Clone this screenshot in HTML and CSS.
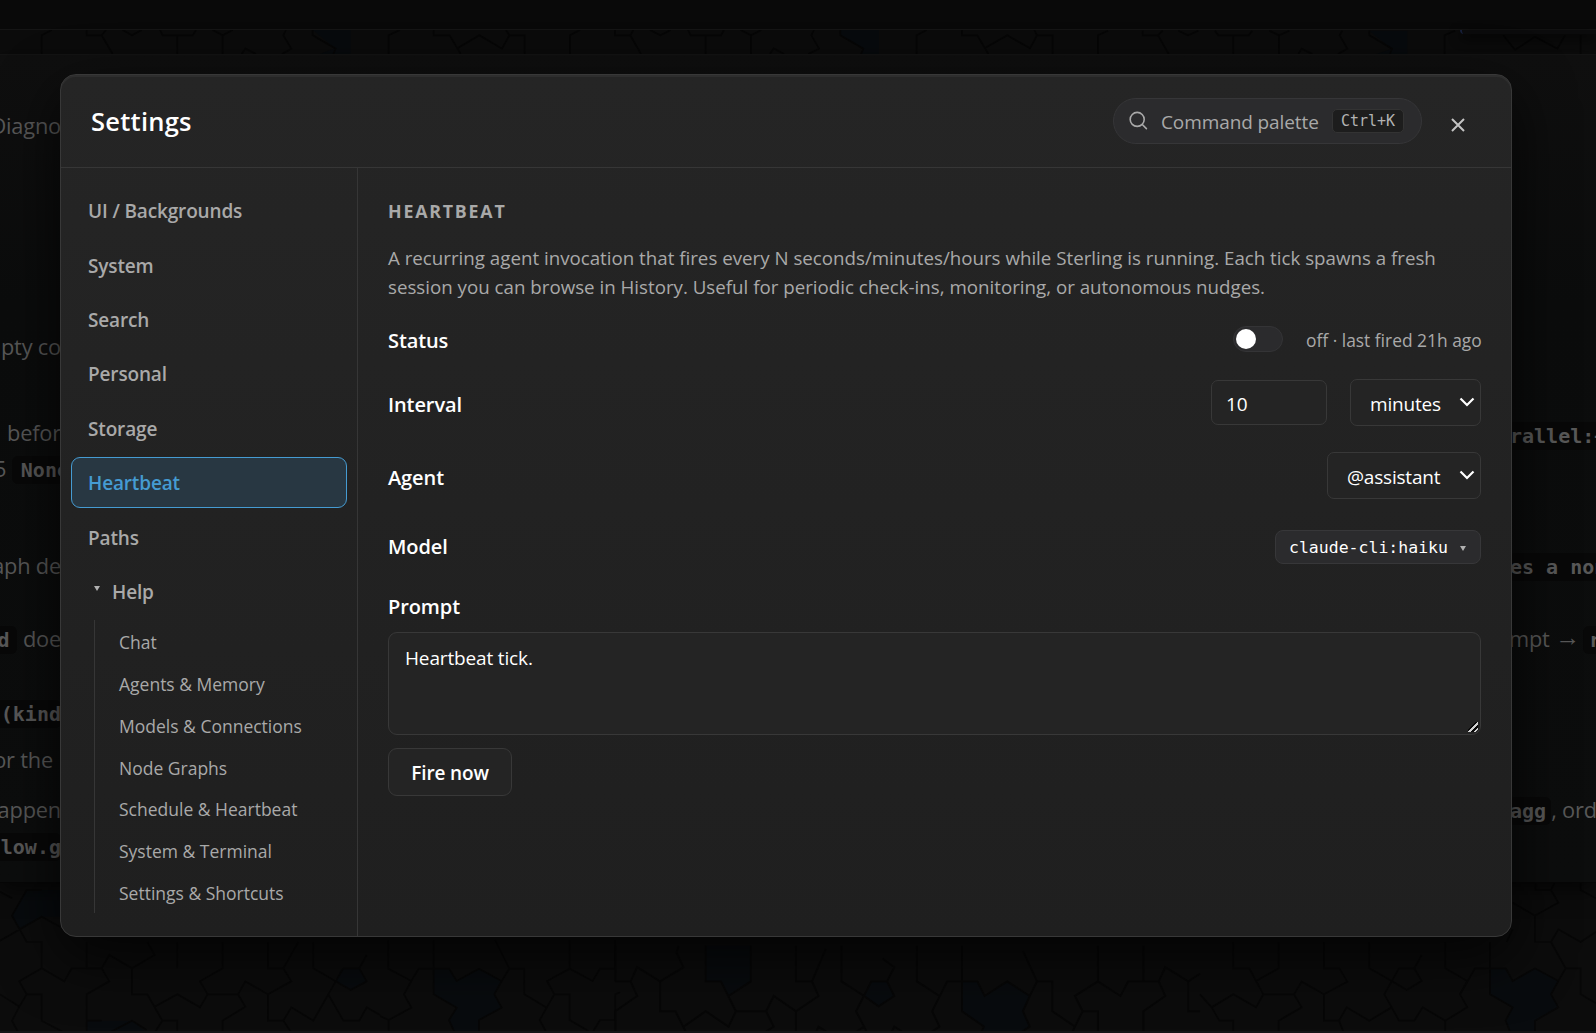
FILE: index.html
```
<!DOCTYPE html>
<html lang="en">
<head>
    <meta charset="utf-8">
    <title>Sterling - Settings</title>
    <link rel="stylesheet" href="styles.css">
</head>
<body>
    <div class="page">
        <svg class="tiles" width="1596" height="1033" viewBox="0 0 1596 1033">
            <g class="tile-fill">
                <g transform="scale(.33333)">
                    <path d="M938 90H1052V162H960L1005 145Z"/>
                </g>
                <g transform="translate(780 20) scale(.33333)">
                    <path d="M181 30H297V102H243L250 86L181 46Z"/>
                </g>
                <g transform="translate(1080 0) scale(.33333)">
                    <path d="M868 92H982V162H890L935 147Z"/>
                </g>
                <g transform="translate(0 560) scale(.33333)">
                    <path d="M80 990H180V1070L125 1070L58 1105L36 1067Z"/>
                    <path d="M260 1382H305L396 1382L440 1418H260Z"/>
                    <path d="M1025 1225H1078L1100 1264L1052 1290L1007 1264Z"/>
                </g>
                <g transform="translate(380 930) scale(.33333)">
                    <path d="M161 116H207L230 153L297 116L365 153L343 193L365 233L297 270V303H222L207 270L230 233L161 193Z"/>
                </g>
                <g transform="translate(600 880) scale(.3827)">
                    <path d="M276 172H394V265L336 303L316 265H276Z"/>
                    <path d="M709 265H750L769 303L728 330L690 303Z"/>
                    <path d="M946 265H986L1005 303L1064 265L1123 303L1105 343L1123 383L1064 422V455H1000L986 422L1003 383L946 343Z"/>
                    <path d="M40 422H80L97 455H40ZM1420 422H1460L1477 455H1420Z"/>
                </g>
                <g transform="translate(1200 580) scale(.33333)">
                    <path d="M870 1165H917L938 1203L1005 1165L1075 1203L1053 1243L1075 1282L1005 1322V1355H930L917 1322L938 1282L870 1243Z"/>
                </g>
            </g>
            <g class="tile-line">
                <g transform="scale(.33333)">
                    <path d="M155 90L125 106V162M260 90V106H305L338 162M305 106L318 90M368 90L396 106L425 90M480 90L488 106H578L588 90M532 106V162M638 90L668 106L698 90M668 106V162M725 162L736 146L768 162M858 90L850 106L874 146L846 162M938 90V106L1007 146L1000 162M1200 90L1166 106V162"/>
                </g>
                <g transform="translate(400 20) scale(.33333)">
                    <path d="M101 30V46H149L172 85L238 46L306 86L328 46H374V102M328 46L318 30M172 85L182 102M540 30L510 46V102M645 30V46H691L723 102M691 46L700 30M750 30L781 46L812 30M864 30L872 46H963L972 30M917 46V102M1022 30L1053 46L1084 30M1053 46V102M1110 102L1121 85L1152 102"/>
                </g>
                <g transform="translate(780 20) scale(.33333)">
                    <path d="M102 30L94 46L117 86L85 102M181 30V46L250 86L243 102M440 30L410 46V102M546 30V46H592L625 102M614 85L682 46L750 85L771 46H818V102M771 46L763 30"/>
                </g>
                <g transform="translate(1080 0) scale(.33333)">
                    <path d="M84 92L54 106V162M188 92V106H234L266 162M234 106L248 92M295 92L324 106L355 92M405 92L415 106H506L517 92M460 106V162M568 92L597 106L628 92M597 106V162M655 162L665 146L697 162M787 92L779 106L802 146L774 162M868 92V106L936 146L930 162M1125 92L1094 106V162M1270 106L1305 150L1365 110L1432 146L1455 106M1502 106V162"/>
                </g>
                <g transform="translate(0 560) scale(.33333)">
                    <path d="M0 995L36 1015M125 990H80L36 1067L80 1146H125V1225L193 1264L215 1225H305L328 1185L396 1225L464 1185L442 1146M0 1142L125 1070L180 1100M125 1225L58 1264L80 1303H125V1382L193 1418M0 1303L58 1340L36 1382L55 1418M58 1340L80 1303M260 1146V1225M260 1382V1303L328 1264L305 1225M396 1225V1303H442L487 1382L464 1418M260 1418V1382H305M328 1418L396 1382L440 1410M464 1340L532 1303L600 1342L623 1303L600 1264L668 1225V1146M532 1146V1225M487 1382H532V1418M623 1303H714L736 1340L668 1382V1418M714 1303L736 1264L804 1303V1382L850 1382L874 1342L940 1382L985 1303L1007 1264L940 1225V1146M804 1146V1225H850L874 1264L804 1303M850 1225L895 1146M850 1382L874 1418M985 1303L1030 1382H1078L1100 1342L1140 1365M1007 1264L1030 1225H1078L1100 1185M1078 1225L1100 1264L1052 1290L1007 1264"/>
                </g>
                <g transform="translate(380 930) scale(.33333)">
                    <path d="M25 30V116L94 153L116 116H207L230 153L297 116L365 153L343 193L365 233L297 270V303M94 153L72 193L94 233L26 270V303M26 270L0 258M161 30V193L230 233L207 270L222 303M345 30L388 116L365 153M388 116H433V193L500 233L523 193L501 153L569 116L638 153L660 116H706V30M569 30V116M523 193H569V270L625 303M500 233L479 270L497 303M640 303L660 270H706V193L720 187"/>
                </g>
                <g transform="translate(600 880) scale(.3827)">
                    <path d="M40 265H80L97 228L157 265L218 228L200 190L205 172M40 172V265M80 265L97 303L40 343V455M157 265V343H197L237 422L220 455M40 422H80L97 455M112 455L157 422L200 455M276 172V265H316L355 343H434L454 303L512 343L571 303L554 265L590 180M394 172V265L336 303M219 383L276 343L336 383L355 343M237 422H276V455M434 343L454 383L394 422V455M512 172V265H554M512 343V422H554L571 383L631 422L690 383L669 343L709 265H750L769 303L728 330L690 303L631 265V172M554 422L571 455M750 265L769 228L738 205M690 383L709 422H750L769 383L828 422L887 383L868 343L907 265H986L1005 303L1064 265L1123 303L1142 265H1182V343L1241 383L1261 343L1241 303L1301 265L1360 303L1380 265H1460L1477 228L1537 265L1568 245M828 172V265L887 303M828 422V455M946 172V343L1003 383L986 422L1000 455M1142 265L1105 185M1123 303L1105 343L1123 383L1064 422V455M1241 383L1222 422L1240 455M1261 343H1301V422L1360 455L1380 422H1460L1477 455M1301 172V265M1420 172V265M1460 265L1477 303L1420 343V455M1537 265V343H1568M1490 455L1537 422L1568 440"/>
                </g>
                <g transform="translate(1200 580) scale(.33333)">
                    <path d="M0 1243L35 1282L100 1243L168 1282L190 1243H282L305 1282L236 1322V1355M35 1282L58 1322H100V1355M100 1086V1165H148L190 1243M236 1086V1165L168 1203L148 1165M282 1243L305 1205L372 1243L442 1205L418 1165H372V1086M372 1243V1322H417L440 1282L508 1322L575 1282L553 1243L597 1165H643L665 1203L620 1230L575 1203L508 1165V1086M417 1322L430 1355M575 1282L597 1322H643L668 1282L736 1322M665 1125L643 1165M736 1086V1165L802 1203L780 1243"/>
                    <path d="M938 968L1005 1007L1075 968L1053 930H1007V905M1053 930L1065 905M1142 905V930L1188 955M1005 1007V1086H1053L1075 1048L1142 1086L1188 1055M1053 1086L1097 1165H1142V1243L1188 1270M870 1086V1243L938 1282L917 1322L930 1355M870 1165H825L780 1243L802 1282L736 1322V1355M870 1165H917L938 1203L1005 1165L1075 1203L1097 1165M1075 1203L1053 1243L1075 1282L1005 1322V1355M938 1048L920 1086"/>
                </g>
            </g>
        </svg>

        <div class="topbar"></div>
        <div class="popover-edge"></div>

        <!-- document behind the dialog -->
        <div class="doc">
            <div class="doc-line first"><span class="left">Diagno</span></div>
            <div class="doc-line gap-185"><span class="left">empty co</span></div>
            <div class="doc-line gap-50"><span class="left">befor</span><span class="right low"><code class="cut-left">rallel:+</code></span></div>
            <div class="doc-line"><span class="left wide">5 <code class="cut-right">None</code></span></div>
            <div class="doc-line gap-61"><span class="left">graph de</span><span class="right"><code class="cut-left">es a non</code></span></div>
            <div class="doc-line gap-37"><span class="left"><code>d</code> doe</span><span class="right">mpt <span class="arrow">→</span> <code class="edge">r</code></span></div>
            <div class="doc-line gap-38"><span class="left"><code class="cut-right">(kind</code></span></div>
            <div class="doc-line gap-11"><span class="left short">for the</span></div>
            <div class="doc-line gap-14"><span class="left">appen</span><span class="right"><code class="cut-left">agg</code>, ord</span></div>
            <div class="doc-line"><span class="left"><code class="cut-right">flow.g</code></span></div>
        </div>
    </div>

    <div class="overlay">
        <div class="modal">
            <header class="modal-header">
                <h1>Settings</h1>
                <button class="palette">
                    <svg width="20" height="20" viewBox="0 0 20 20" fill="none" stroke="currentColor" stroke-width="1.6" stroke-linecap="round">
                        <circle cx="8.2" cy="8.4" r="7"/>
                        <path d="M13.3 13.5L17.4 17.6"/>
                    </svg>
                    <span class="palette-label">Command palette</span>
                    <kbd>Ctrl+K</kbd>
                </button>
                <button class="close">
                    <svg width="14" height="14" viewBox="0 0 14 14" stroke="currentColor" stroke-width="2">
                        <path d="M1 1L13 13M13 1L1 13"/>
                    </svg>
                </button>
            </header>

            <div class="modal-body">
                <nav class="sidebar">
                    <a class="nav-item">UI / Backgrounds</a>
                    <a class="nav-item">System</a>
                    <a class="nav-item">Search</a>
                    <a class="nav-item">Personal</a>
                    <a class="nav-item">Storage</a>
                    <a class="nav-item active">Heartbeat</a>
                    <a class="nav-item">Paths</a>
                    <a class="nav-item help"><span class="caret"></span>Help</a>
                    <div class="sub-nav">
                        <a>Chat</a>
                        <a>Agents &amp; Memory</a>
                        <a>Models &amp; Connections</a>
                        <a>Node Graphs</a>
                        <a>Schedule &amp; Heartbeat</a>
                        <a>System &amp; Terminal</a>
                        <a>Settings &amp; Shortcuts</a>
                    </div>
                </nav>

                <main class="content">
                    <h2>HEARTBEAT</h2>
                    <p class="desc">A recurring agent invocation that fires every N seconds/minutes/hours while Sterling is running. Each tick spawns a fresh<br>session you can browse in History. Useful for periodic check-ins, monitoring, or autonomous nudges.</p>

                    <div class="row row-status">
                        <label>Status</label>
                        <span class="toggle"><span class="knob"></span></span>
                        <span class="status-text">off · last fired 21h ago</span>
                    </div>
                    <div class="row row-field">
                        <label>Interval</label>
                        <input class="number" type="text" value="10">
                        <div class="select select-unit">
                            <span>minutes</span>
                            <svg width="16" height="10" viewBox="0 0 16 10" fill="none" stroke="currentColor" stroke-width="2.2"><path d="M1.5 1.5L8 8L14.5 1.5"/></svg>
                        </div>
                    </div>
                    <div class="row row-field">
                        <label>Agent</label>
                        <div class="select select-agent">
                            <span>@assistant</span>
                            <svg width="16" height="10" viewBox="0 0 16 10" fill="none" stroke="currentColor" stroke-width="2.2"><path d="M1.5 1.5L8 8L14.5 1.5"/></svg>
                        </div>
                    </div>
                    <div class="row row-model">
                        <label>Model</label>
                        <button class="model">claude-cli:haiku<span class="caret"></span></button>
                    </div>
                    <div class="row row-prompt">
                        <label>Prompt</label>
                    </div>
                    <textarea class="prompt">Heartbeat tick.</textarea>
                    <button class="fire">Fire now</button>
                </main>
            </div>
        </div>
    </div>
</body>
</html>
```
FILE: styles.css
```
* {
    box-sizing: border-box;
}
body {
    margin: 0;
    width: 1596px;
    height: 1033px;
    overflow: hidden;
    background: #0c0c0c;
    color-scheme: dark;
    font-family: "Open Sans", "Noto Sans", sans-serif;
    color: #fff;
}
h1, h2, p {
    margin: 0;
}
button, input, textarea {
    font-family: inherit;
    margin: 0;
}

/* page behind */
.page {
    position: relative;
    height: 1033px;
    overflow: hidden;
    border-bottom: 2px solid #141416;
}
.tiles {
    position: absolute;
    top: 0;
    left: 0;
}
.tile-fill {
    fill: #080b0e;
}
.tile-line {
    fill: none;
    stroke: #070707;
    stroke-width: 5;
}
.topbar {
    position: relative;
    height: 30px;
    background: #090909;
    border-bottom: 1px solid #151515;
}
.popover-edge {
    position: absolute;
    top: 30px;
    right: 0;
    width: 136px;
    height: 4px;
    background: #0c0c0d;
    border-left: 2px solid #18203a;
    border-bottom-left-radius: 6px;
    box-shadow: 0 4px 12px #000;
}
.doc {
    position: relative;
    height: 829px;
    margin-top: 24px;
    background: linear-gradient(180deg, #0f0f0f, #0b0c0c 30%, #0c0d0d);
    border-top: 1px solid #131313;
    border-bottom: 1px solid #060606;
    box-shadow: 0 6px 20px rgba(0, 0, 0, 0.6);
}
.doc-line {
    display: flex;
    justify-content: space-between;
    align-items: center;
    height: 36px;
    padding-bottom: 3px;
    font-size: 21.8px;
    letter-spacing: -0.2px;
    color: #585858;
    white-space: pre;
}
.doc-line.first { margin-top: 54px; }
.gap-185 { margin-top: 185px; }
.gap-50 { margin-top: 50px; }
.gap-61 { margin-top: 61px; }
.gap-37 { margin-top: 37px; }
.gap-38 { margin-top: 38px; }
.gap-11 { margin-top: 11px; }
.gap-14 { margin-top: 14px; }
.doc-line .left {
    display: flex;
    justify-content: flex-end;
    align-items: center;
    width: 61px;
}
.doc-line .left.wide {
    width: 69px;
}
.doc-line .left.short {
    width: 53px;
}
.doc-line .right {
    display: flex;
    align-items: center;
    width: 87px;
    overflow: hidden;
}
.doc-line .right.low {
    padding-top: 3px;
}
.arrow {
    margin-top: -5px;
    font-size: 25px;
    line-height: 30px;
}
.doc-line code {
    margin-top: 3px;
    padding: 1px 8px 1px 9px;
    border-radius: 6px;
    background: #080808;
    font: bold 20px/26px "DejaVu Sans Mono", monospace;
    letter-spacing: 0;
}
.doc-line code.cut-right {
    padding-right: 0;
}
.doc-line code.cut-left {
    padding-left: 1px;
    padding-right: 5px;
}
.doc-line code.edge {
    margin-left: 3px;
    padding-left: 6px;
}

/* dialog */
.overlay {
    position: absolute;
    top: 0;
    left: 0;
    padding: 74px 60px;
}
.modal {
    display: flex;
    flex-direction: column;
    width: 1452px;
    height: 863px;
    border: 1px solid #383838;
    border-radius: 16px;
    background: linear-gradient(180deg, #252525, #1f1f1f);
    box-shadow: inset 0 2px 0 #2e2e2e, 0 20px 60px rgba(0, 0, 0, 0.75);
    overflow: hidden;
}
.modal-header {
    display: flex;
    align-items: center;
    flex: none;
    height: 93px;
    padding: 0 46px 0 30px;
    border-bottom: 1px solid #363636;
}
.modal-header h1 {
    flex: 1;
    font-size: 25.5px;
    font-weight: 600;
    line-height: 34px;
    letter-spacing: 0.25px;
}
.palette {
    display: flex;
    align-items: center;
    width: 309px;
    height: 46px;
    padding: 0 17px 0 15px;
    border: 1px solid #363638;
    border-radius: 23px;
    background: #2b2b2d;
    color: #a9a9a9;
}
.palette-label {
    width: 157px;
    margin: 2px 14px 0 12px;
    font-size: 19px;
    letter-spacing: -0.1px;
    text-align: left;
    white-space: nowrap;
}
kbd {
    width: 72px;
    height: 24px;
    border: 1px solid #333;
    border-radius: 5px;
    background: #1d1d1d;
    font: 15px/23px "DejaVu Sans Mono", monospace;
    color: #b3b3b3;
}
.close {
    width: 14px;
    height: 14px;
    margin: 7px 0 0 29px;
    padding: 0;
    border: none;
    background: none;
    color: #c4c4c4;
}
.close svg {
    display: block;
}
.modal-body {
    display: flex;
    flex: 1;
    min-height: 0;
}

/* sidebar */
.sidebar {
    display: flex;
    flex-direction: column;
    gap: 3.4px;
    width: 297px;
    padding: 17px 10px 0;
    border-right: 1px solid #363636;
}
.nav-item {
    display: flex;
    align-items: center;
    flex: none;
    height: 51px;
    padding: 1.5px 16px 0;
    border: 1px solid transparent;
    border-radius: 9px;
    font-size: 19px;
    font-weight: 600;
    letter-spacing: -0.15px;
    color: #a9a9a9;
}
.nav-item.active {
    border-color: #459bd2;
    background: #283742;
    color: #459bd2;
}
.caret {
    border: 3px solid transparent;
    border-top: 5px solid #b0b0b0;
    border-bottom: none;
}
.help .caret {
    margin: -7px 12px 0 6px;
}
.sub-nav {
    display: flex;
    flex-direction: column;
    margin-left: 23px;
    border-left: 1px solid #363636;
}
.sub-nav a {
    height: 41.8px;
    padding-left: 24px;
    font-size: 17.5px;
    line-height: 45px;
    color: #a9a9a9;
}

/* content */
.content {
    flex: 1;
    padding: 29px 30px 0;
}
h2 {
    height: 46px;
    font-size: 17.8px;
    font-weight: 700;
    line-height: 28px;
    letter-spacing: 1.8px;
    color: #a9a9a9;
}
.desc {
    height: 71px;
    font-size: 18.73px;
    line-height: 29px;
    white-space: nowrap;
    color: #a9a9a9;
}
.row {
    display: flex;
    align-items: center;
}
.row label {
    flex: 1;
    font-size: 20px;
    font-weight: 600;
    letter-spacing: -0.1px;
}
.row-status { height: 52px; }
.row-field { height: 73px; }
.row-field label { padding-top: 3px; }
.row-model { height: 70px; }
.row-model label { padding-bottom: 2px; }
.row-prompt { height: 50px; padding-bottom: 2px; }
.toggle {
    width: 50px;
    height: 26px;
    margin: -2px 23px 0 0;
    padding: 2px;
    border: 1px solid #343436;
    border-radius: 13px;
    background: #2b2b2d;
}
.knob {
    display: block;
    width: 20px;
    height: 20px;
    border-radius: 50%;
    background: #fff;
}
.status-text {
    width: 175px;
    font-size: 17.4px;
    white-space: nowrap;
    color: #a9a9a9;
}
.number {
    width: 116px;
    height: 45px;
    margin-right: 23px;
    padding: 2px 14px 0;
    border: 1px solid #383838;
    border-radius: 7px;
    background: #242424;
    color: #fff;
    font-size: 19px;
}
.select {
    display: flex;
    align-items: center;
    justify-content: space-between;
    height: 47px;
    padding: 0 5px 0 19px;
    border: 1px solid #383838;
    border-radius: 7px;
    background: #242424;
    font-size: 19px;
    letter-spacing: -0.2px;
}
.select span {
    padding-top: 3px;
}
.select svg {
    margin-top: -1px;
}
.select-unit { width: 131px; }
.select-agent { width: 154px; }
.model {
    display: flex;
    align-items: center;
    width: 206px;
    height: 34px;
    padding: 0 13px;
    border: 1px solid #373739;
    border-radius: 8px;
    background: #2b2b2d;
    color: #fff;
    font: 16.5px "DejaVu Sans Mono", monospace;
    white-space: nowrap;
}
.model .caret {
    margin: 3px 0 0 12px;
}
.prompt {
    display: block;
    width: 100%;
    height: 103px;
    padding: 10px 16px;
    border: 1px solid #383838;
    border-radius: 9px;
    background: #242424;
    color: #fff;
    font-size: 19px;
    line-height: 30px;
    letter-spacing: -0.15px;
    outline: none;
}
/* resize grip */
.prompt::-webkit-resizer {
    background: linear-gradient(135deg, transparent 38%, #0a0a0a 38% 48%, #d0d0d0 48% 62%, #0a0a0a 62% 76%, #d0d0d0 76% 88%, transparent 88%) 3px 3px / 10px 10px no-repeat;
}
.fire {
    width: 124px;
    height: 48px;
    margin-top: 13px;
    padding: 2px 0 0;
    border: 1px solid #383838;
    border-radius: 9px;
    background: #242424;
    color: #fff;
    font-size: 19px;
    font-weight: 600;
    letter-spacing: -0.15px;
}
```
